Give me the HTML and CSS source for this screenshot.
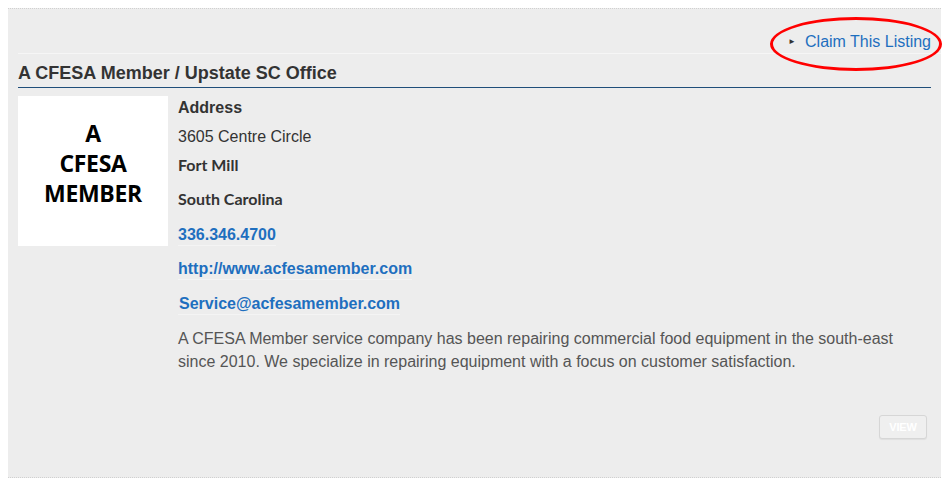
FILE: index.html
```html
<!DOCTYPE html>
<html>
<head>
<meta charset="utf-8">
<link rel="stylesheet" href="styles.css">
</head>
<body>
<div class="panel">
  <div class="claim-row">
    <a class="claim" href="#"><span class="tri">&#9658;</span>Claim This Listing</a>
    <span class="ring"></span>
  </div>
  <h2 class="title">A CFESA Member / Upstate SC Office</h2>
  <div class="listing">
    <div class="logo">
      <span>A</span>
      <span>CFESA</span>
      <span>MEMBER</span>
    </div>
    <div class="info">
      <div class="label">Address</div>
      <div class="street">3605 Centre Circle</div>
      <div class="city">Fort Mill</div>
      <div class="state">South Carolina</div>
      <a class="link phone" href="#">336.346.4700</a>
      <a class="link url" href="#">http://www.acfesamember.com</a>
      <a class="link email" href="#">Service@acfesamember.com</a>
      <p class="desc">A CFESA Member service company has been repairing commercial food equipment in the south-east since 2010. We specialize in repairing equipment with a focus on customer satisfaction.</p>
    </div>
  </div>
  <div class="actions">
    <button class="view">VIEW</button>
  </div>
</div>
</body>
</html>
```

FILE: styles.css
```css
html, body {
  margin: 0;
  padding: 0;
  background: #ffffff;
}
body {
  padding: 8px;
  font-family: "Liberation Sans", Arial, sans-serif;
  color: #333;
}
.panel {
  width: 933px;
  background: #ededed;
  border-top: 1px dotted #d0d0d0;
  border-bottom: 1px dotted #d0d0d0;
  padding-bottom: 38px;
}
.claim-row {
  position: relative;
  margin-left: 10px;
  padding: 23px 10px 1px 0;
  display: flex;
  justify-content: flex-end;
  border-bottom: 1px solid #f6f6f6;
}
.claim {
  display: flex;
  align-items: center;
  font-size: 16px;
  line-height: 20px;
  color: #1e6fbf;
  text-decoration: none;
}
.tri {
  font-size: 8px;
  color: #333;
  margin-right: 9px;
}
.ring {
  position: absolute;
  left: 752px;
  top: 8px;
  width: 166px;
  height: 48px;
  border: 3px solid #ff0000;
  border-radius: 50%;
}
.title {
  margin: 0 10px 0 10px;
  padding: 8px 0 3px;
  font-size: 18px;
  line-height: 22px;
  font-weight: bold;
  color: #333;
  border-bottom: 1px solid #1f4e7a;
}
.listing {
  display: flex;
  gap: 10px;
  margin: 8px 10px 0 10px;
}
.logo {
  flex: none;
  width: 150px;
  height: 150px;
  background: #fff;
  display: flex;
  flex-direction: column;
  align-items: center;
  justify-content: center;
  padding-bottom: 16px;
  box-sizing: border-box;
  font-family: "Open Sans", sans-serif;
  font-weight: 700;
  font-size: 23px;
  line-height: 30px;
  color: #000;
  letter-spacing: -0.3px;
}
.info {
  flex: 1;
  display: flex;
  flex-direction: column;
  align-items: flex-start;
  padding-top: 1px;
  font-size: 16px;
  line-height: 22px;
}
.label {
  font-weight: bold;
}
.street {
  margin-top: 7px;
  color: #333;
}
.city, .state {
  font-family: Lato, sans-serif;
  font-weight: 700;
  font-size: 16px;
  color: #333;
}
.city { margin-top: 6px; }
.state { margin-top: 12px; }
.link {
  font-weight: bold;
  color: #1e6fbf;
  text-decoration: none;
  border-bottom: 1px solid #f4f4f4;
  line-height: 21px;
}
.phone { margin-top: 14px; }
.url { margin-top: 12px; }
.email { margin-top: 13px; padding-left: 1px; }
.desc {
  margin: 12px 0 0;
  color: #555;
  line-height: 23px;
}
.actions {
  display: flex;
  justify-content: flex-end;
  margin-top: 42px;
  padding-right: 14px;
}
.view {
  width: 48px;
  height: 24px;
  padding: 0;
  background: #efefef;
  border: 1px solid #d6d6d6;
  border-radius: 3px;
  box-shadow: 0 1px 1px rgba(0,0,0,0.06);
  color: #fff;
  font-family: "Liberation Sans", Arial, sans-serif;
  font-weight: bold;
  font-size: 11px;
  letter-spacing: -0.2px;
}
```
